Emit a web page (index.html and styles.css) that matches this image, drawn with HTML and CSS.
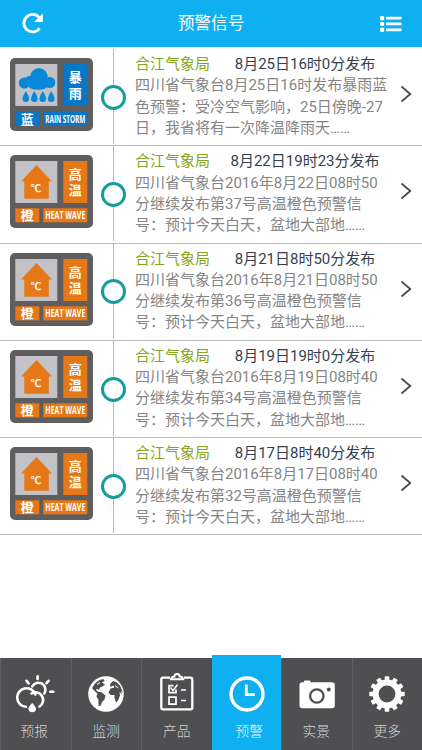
FILE: index.html
```
<!DOCTYPE html>
<html lang="zh-CN">
<head>
    <meta charset="UTF-8">
    <meta name="viewport" content="width=device-width, initial-scale=1.0">
    <title>预警信号</title>
    <link rel="stylesheet" href="styles.css">
</head>
<body>
    <!-- shared icons -->
    <svg class="defs" width="0" height="0">
        <symbol id="heat" viewBox="0 0 83 73">
            <rect width="83" height="73" rx="5" fill="#5f5d5d"/>
            <rect x="5.3" y="6" width="42" height="42" fill="#c3c2c6"/>
            <path d="M26.5 10 L42 26.5 H38.8 V43.7 H14.3 V26.5 H11 Z" fill="#e67817"/>
            <rect x="53.3" y="6" width="24" height="42" fill="#e67817"/>
            <rect x="5.3" y="53.3" width="24" height="14" fill="#e67817"/>
            <rect x="33.3" y="53.3" width="44" height="14" fill="#e67817"/>
            <text class="sign-unit" x="26" y="36.5">℃</text>
            <text class="sign-cn" x="65.3" y="24">高</text>
            <text class="sign-cn" x="65.3" y="40">温</text>
            <text class="sign-cn" x="17.3" y="65">橙</text>
            <text class="sign-en" x="35.3" y="64.3" textLength="40" lengthAdjust="spacingAndGlyphs">HEAT WAVE</text>
        </symbol>
        <symbol id="rain" viewBox="0 0 83 73">
            <rect width="83" height="73" rx="5" fill="#5f5d5d"/>
            <rect x="5.3" y="6" width="42" height="42" fill="#c2c2c4"/>
            <g fill="#0888d8">
                <circle cx="14.3" cy="25" r="5.5"/>
                <circle cx="19.5" cy="22.5" r="4.5"/>
                <circle cx="29" cy="18.8" r="8.7"/>
                <circle cx="39.7" cy="24.5" r="5.6"/>
                <ellipse cx="28" cy="26.3" rx="11" ry="5.5"/>
                <path id="drop" d="M15.8 33 q3.3 5.5 3.3 7.8 a3.3 3.3 0 0 1-6.6 0 q0-2.3 3.3-7.8z"/>
                <use href="#drop" x="8.5"/>
                <use href="#drop" x="17"/>
                <use href="#drop" x="25.4"/>
            </g>
            <rect x="53.3" y="6" width="24" height="42" fill="#0878c6"/>
            <rect x="5.3" y="54" width="24" height="14" fill="#0878c6"/>
            <rect x="34" y="54" width="43.3" height="14" fill="#0878c6"/>
            <text class="sign-cn" x="65.3" y="24">暴</text>
            <text class="sign-cn" x="65.3" y="40">雨</text>
            <text class="sign-cn" x="17.3" y="65.5">蓝</text>
            <text class="sign-en" x="35.3" y="64.7" textLength="40" lengthAdjust="spacingAndGlyphs">RAIN STORM</text>
        </symbol>
        <symbol id="arrow" viewBox="0 0 12 18">
            <path d="M1.5 1.5 L10.3 9 L1.5 16.5" fill="none" stroke="#414852" stroke-width="1.7"/>
        </symbol>
    </svg>

    <div class="header">
        <svg class="refresh" width="24" height="24" viewBox="0 0 24 24">
            <path d="M18.2 5.5 A8.7 8.7 0 1 0 18.6 16.3" fill="none" stroke="#fff" stroke-width="2.8"/>
            <path d="M21.8 1.5 V10 H13.2 Z" fill="#fff"/>
        </svg>
        <h1>预警信号</h1>
        <svg class="list-btn" width="22" height="18" viewBox="0 0 22 18" fill="#fff">
            <rect x="0" y="1" width="4.2" height="4.2" rx="1"/>
            <rect x="0" y="6.9" width="4.2" height="4.2" rx="1"/>
            <rect x="0" y="12.8" width="4.2" height="4.2" rx="1"/>
            <rect x="6" y="1.7" width="15.5" height="2.7" rx=".6"/>
            <rect x="6" y="7.6" width="15.5" height="2.7" rx=".6"/>
            <rect x="6" y="13.5" width="15.5" height="2.7" rx=".6"/>
        </svg>
    </div>

    <div class="list">
        <div class="item">
            <svg class="sign"><use href="#rain"/></svg>
            <div class="timeline"><span class="ring"></span></div>
            <div class="content">
                <div class="top"><span class="station">合江气象局</span><span class="date">8月25日16时0分发布</span></div>
                <p>四川省气象台8月25日16时发布暴雨蓝色预警：受冷空气影响，25日傍晚-27日，我省将有一次降温降雨天……</p>
            </div>
            <svg class="arrow"><use href="#arrow"/></svg>
        </div>
        <div class="item">
            <svg class="sign"><use href="#heat"/></svg>
            <div class="timeline"><span class="ring"></span></div>
            <div class="content">
                <div class="top"><span class="station">合江气象局</span><span class="date">8月22日19时23分发布</span></div>
                <p>四川省气象台2016年8月22日08时50分继续发布第37号高温橙色预警信号：预计今天白天，盆地大部地……</p>
            </div>
            <svg class="arrow"><use href="#arrow"/></svg>
        </div>
        <div class="item">
            <svg class="sign"><use href="#heat"/></svg>
            <div class="timeline"><span class="ring"></span></div>
            <div class="content">
                <div class="top"><span class="station">合江气象局</span><span class="date">8月21日8时50分发布</span></div>
                <p>四川省气象台2016年8月21日08时50分继续发布第36号高温橙色预警信号：预计今天白天，盆地大部地……</p>
            </div>
            <svg class="arrow"><use href="#arrow"/></svg>
        </div>
        <div class="item">
            <svg class="sign"><use href="#heat"/></svg>
            <div class="timeline"><span class="ring"></span></div>
            <div class="content">
                <div class="top"><span class="station">合江气象局</span><span class="date">8月19日19时0分发布</span></div>
                <p>四川省气象台2016年8月19日08时40分继续发布第34号高温橙色预警信号：预计今天白天，盆地大部地……</p>
            </div>
            <svg class="arrow"><use href="#arrow"/></svg>
        </div>
        <div class="item">
            <svg class="sign"><use href="#heat"/></svg>
            <div class="timeline"><span class="ring"></span></div>
            <div class="content">
                <div class="top"><span class="station">合江气象局</span><span class="date">8月17日8时40分发布</span></div>
                <p>四川省气象台2016年8月17日08时40分继续发布第32号高温橙色预警信号：预计今天白天，盆地大部地……</p>
            </div>
            <svg class="arrow"><use href="#arrow"/></svg>
        </div>
    </div>

    <div class="tabs">
        <div class="tab forecast">
            <svg width="40" height="40" viewBox="0 0 40 40" fill="none" stroke="#fff" stroke-width="2.6" stroke-linecap="round">
                <path d="M9.8 32.8 A9.3 9.3 0 1 1 19.3 20.5"/>
                <path d="M15.5 19.5 A7.6 7.6 0 1 1 23.5 32.5"/>
                <path d="M16.3 12.3 A7 7 0 1 1 28.3 19.5"/>
                <path d="M10.5 6.8 L12.6 9.3 M21.6 2.3 V5 M32.6 6.8 L30.5 9.2 M34.3 17.7 H37.3"/>
                <path d="M16.2 29 Q20 33 20 34.5 A3.8 3.8 0 0 1 12.4 34.5 Q12.4 33 16.2 29Z" fill="#fff" stroke="none"/>
            </svg>
            <span>预报</span>
        </div>
        <div class="tab monitor">
            <svg width="40" height="40" viewBox="0 0 40 40">
                <circle cx="20" cy="20" r="17.8" fill="#fff"/>
                <g fill="#4f4f51">
                    <path d="M6 14 L9 9.500 L13.500 6 L17.500 5 L18.500 7 L16 8.500 L19 10.500 L16.500 12.500 L14 13.500 L13 16 L11 14.800 L10 16 L12.500 18 L15 18 L19.500 21.500 L18.500 25.500 L16 28 L14.500 32 L12.500 31.500 L12.500 26 L10.500 22.500 L11.500 19.500 L8 16.500Z"/>
                    <path d="M24 10 L27 7 L30 8 L34 11.500 L37 18.500 L35 16.500 L36 20 L33.500 18 L34 21.500 L32 26.500 L30 28.500 L28.500 24 L28.500 21 L24.500 21 L22.500 18.500 L24.500 14.500 L28.500 13.500 L27.500 11.500 L24.500 13Z"/>
                </g>
                <path d="M11 10.500 L14 8.500 M29 11.500 L32.500 14" stroke="#fff"/>
            </svg>
            <span>监测</span>
        </div>
        <div class="tab product">
            <svg width="40" height="42" viewBox="0 0 40 42" fill="none" stroke="#fff">
                <path d="M13 6.7 H6 Q4.300 6.7 4.300 8.500 V36.500 Q4.300 38.300 6.100 38.300 H33.500 Q35.300 38.300 35.300 36.500 V8.500 Q35.300 6.7 33.500 6.7 H27" stroke-width="2.300"/>
                <path d="M14 8.200 Q15 5.500 17.500 5.500 Q17.500 3 20 3 Q22.600 3 22.600 5.500 Q25.500 5.500 26.300 8.200 Z" stroke-width="1.900"/>
                <path d="M16.500 14.700 H12 V21.700 H19 V18.500 M12 26.200 H19 V33.200 H12 Z" stroke-width="1.700"/>
                <path d="M13.500 16.500 L16 19.500 L20.500 13.700 M24 19 H29 M24 29.500 H29" stroke-width="1.600"/>
            </svg>
            <span>产品</span>
        </div>
        <div class="tab warning active">
            <svg width="40" height="40" viewBox="0 0 40 40" fill="none" stroke="#fff">
                <circle cx="20" cy="20" r="16" stroke-width="3.400"/>
                <path d="M19.300 10.500 V20.700 H27.800" stroke-width="2.700"/>
            </svg>
            <span>预警</span>
        </div>
        <div class="tab camera">
            <svg width="40" height="40" viewBox="0 0 40 40">
                <path d="M5.300 8.200 H7 V7.500 Q7 6.500 8 6.500 H12.500 Q13.500 6.500 13.500 7.500 V8.200 H35 Q37.800 8.200 37.800 11 V31.500 Q37.800 34.300 35 34.300 H5.300 Q2.500 34.300 2.500 31.500 V11 Q2.500 8.200 5.300 8.200Z" fill="#fff"/>
                <circle cx="19.800" cy="22" r="6.700" fill="none" stroke="#4f4f51" stroke-width="2.300"/>
                <circle cx="31.800" cy="15.500" r="2" fill="#4f4f51"/>
            </svg>
            <span>实景</span>
        </div>
        <div class="tab more">
            <svg width="40" height="40" viewBox="0 0 40 40">
                <circle cx="20" cy="20" r="11.400" fill="none" stroke="#fff" stroke-width="6"/>
                <g fill="#fff">
                    <g id="teeth">
                        <rect x="17.700" y="2.300" width="4.600" height="5" rx=".8"/>
                        <rect x="17.700" y="32.700" width="4.600" height="5" rx=".8"/>
                    </g>
                    <use href="#teeth" transform="rotate(30 20 20)"/>
                    <use href="#teeth" transform="rotate(60 20 20)"/>
                    <use href="#teeth" transform="rotate(90 20 20)"/>
                    <use href="#teeth" transform="rotate(120 20 20)"/>
                    <use href="#teeth" transform="rotate(150 20 20)"/>
                </g>
            </svg>
            <span>更多</span>
        </div>
    </div>
</body>
</html>
```
FILE: styles.css
```
* {
    box-sizing: border-box;
}
body {
    margin: 0;
    height: 750px;
    display: flex;
    flex-direction: column;
    background-color: #fff;
    font-family: Roboto, "Noto Sans CJK SC", sans-serif;
    overflow: hidden;
}
.defs {
    position: absolute;
}
.header {
    height: 47px;
    flex: none;
    display: flex;
    align-items: center;
    justify-content: space-between;
    padding: 0 20px 0 21px;
    background-color: #0eb0f1;
    color: #fff;
}
.header h1 {
    margin: 0 3px 0 0;
    font-size: 16.7px;
    font-weight: 400;
    line-height: 24px;
}
.list {
    flex: 1;
    padding-top: 2px;
}
.item {
    height: 97.3px;
    display: flex;
    border-bottom: 1px solid #bdbdbd;
}
.sign {
    width: 83px;
    height: 73px;
    margin: 9px 0 0 9.5px;
    flex: none;
}
.sign-cn {
    font-family: "Noto Sans CJK SC", sans-serif;
    font-size: 13px;
    font-weight: 700;
    text-anchor: middle;
    fill: #fff;
}
.sign-en {
    font-family: "Open Sans", sans-serif;
    font-size: 10.5px;
    font-weight: 700;
    fill: #fff;
}
.sign-unit {
    font-family: "Noto Sans CJK SC", sans-serif;
    font-size: 10.5px;
    font-weight: 700;
    text-anchor: middle;
    fill: #fff;
}
.timeline {
    width: 25px;
    margin-left: 8.5px;
    flex: none;
    display: flex;
    align-items: center;
    background: linear-gradient(#b9b9b9, #b9b9b9) 12px 0 / 1.3px 95px no-repeat;
}
.ring {
    width: 25px;
    height: 25px;
    border: 3.5px solid #159d9e;
    border-radius: 50%;
    background-color: #fff;
}
.content {
    width: 254px;
    margin-left: 9px;
    padding-top: 5px;
    flex: none;
    font-size: 15px;
    line-height: 21.3px;
    white-space: nowrap;
}
.top {
    display: flex;
}
.station {
    width: 75px;
    flex: none;
    color: #84a51c;
}
.date {
    width: 190px;
    flex: none;
    text-align: center;
    color: #343f50;
}
.content p {
    margin: 0;
    white-space: normal;
    color: #858585;
}
.arrow {
    width: 12px;
    height: 18px;
    margin: 36px 0 0 11px;
    flex: none;
}
.tabs {
    height: 95px;
    flex: none;
    display: flex;
    align-items: flex-end;
}
.tab {
    width: 70.5px;
    height: 92px;
    flex: none;
    display: flex;
    flex-direction: column;
    align-items: center;
    padding-top: 16px;
    background-color: #4f4f51;
    border-left: 1px solid #606062;
    color: #d4d4d4;
    font-family: "Noto Sans CJK SC", sans-serif;
    font-size: 13.7px;
    font-weight: 300;
}
.tab svg {
    flex: none;
}
.tab span {
    margin-top: 6px;
    line-height: 20px;
}
.forecast span {
    margin-right: 3px;
}
.product svg {
    margin: -3px 0 1px;
}
.tab.active {
    width: 69.5px;
    height: 95px;
    padding-top: 18.5px;
    background-color: #0eb0f1;
    border-left-color: #0eb0f1;
    color: #e4f7ff;
}
.active span {
    margin-left: 5px;
}
.camera span {
    margin-right: 1px;
}
```
